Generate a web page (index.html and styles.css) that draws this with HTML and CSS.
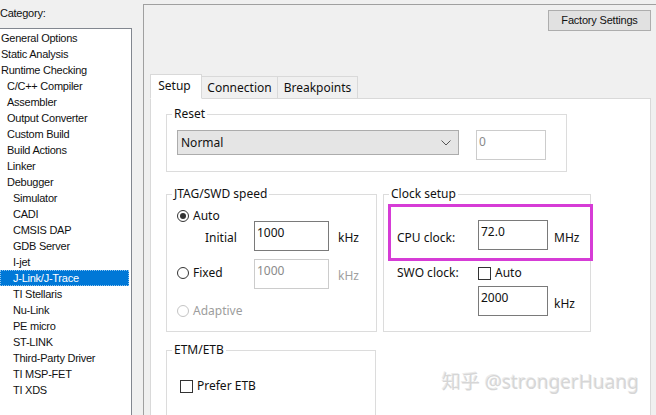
FILE: index.html
```html
<!DOCTYPE html>
<html>
<head>
<meta charset="utf-8">
<link rel="stylesheet" href="styles.css">
</head>
<body>
<div class="app">
  <div class="sidebar">
    <div class="cat-label">Category:</div>
    <div class="list">
      <div class="item l0">General Options</div>
      <div class="item l0">Static Analysis</div>
      <div class="item l0">Runtime Checking</div>
      <div class="item l1">C/C++ Compiler</div>
      <div class="item l1">Assembler</div>
      <div class="item l1">Output Converter</div>
      <div class="item l1">Custom Build</div>
      <div class="item l1">Build Actions</div>
      <div class="item l1">Linker</div>
      <div class="item l1">Debugger</div>
      <div class="item l2">Simulator</div>
      <div class="item l2">CADI</div>
      <div class="item l2">CMSIS DAP</div>
      <div class="item l2">GDB Server</div>
      <div class="item l2">I-jet</div>
      <div class="item l2 selected">J-Link/J-Trace</div>
      <div class="item l2">TI Stellaris</div>
      <div class="item l2">Nu-Link</div>
      <div class="item l2">PE micro</div>
      <div class="item l2">ST-LINK</div>
      <div class="item l2">Third-Party Driver</div>
      <div class="item l2">TI MSP-FET</div>
      <div class="item l2">TI XDS</div>
    </div>
  </div>
  <div class="panel">
    <div class="header">
      <div class="btn">Factory Settings</div>
    </div>
    <div class="tabs">
      <div class="tab active">Setup</div>
      <div class="tab t-conn">Connection</div>
      <div class="tab t-bp">Breakpoints</div>
    </div>
    <div class="pane">
      <div class="group g-reset">
        <span class="legend">Reset</span>
        <div class="row reset-row">
          <div class="select">
            <span>Normal</span>
            <svg class="chev" width="10" height="6" viewBox="0 0 10 6"><path d="M0.5 0.5 L5 5 L9.5 0.5" fill="none" stroke="#555" stroke-width="1"/></svg>
          </div>
          <div class="input disabled small">0</div>
        </div>
      </div>
      <div class="mid">
        <div class="group g-jtag">
          <span class="legend">JTAG/SWD speed</span>
          <div class="row j1">
            <span class="radio checked"></span><span class="rlabel">Auto</span>
          </div>
          <div class="row j2">
            <span class="initial">Initial</span>
            <div class="input">1000</div>
            <span class="unit">kHz</span>
          </div>
          <div class="row j3">
            <span class="rcell"><span class="radio"></span><span class="rlabel">Fixed</span></span>
            <div class="input disabled">1000</div>
            <span class="unit dis">kHz</span>
          </div>
          <div class="row j4">
            <span class="radio dis"></span><span class="rlabel dis">Adaptive</span>
          </div>
        </div>
        <div class="group g-clock">
          <span class="legend">Clock setup</span>
          <div class="mark"></div>
          <div class="row c1">
            <span class="clabel">CPU clock:</span>
            <div class="input cin">72.0</div>
            <span class="unit2">MHz</span>
          </div>
          <div class="row c2">
            <span class="clabel">SWO clock:</span>
            <span class="check"></span><span class="rlabel">Auto</span>
          </div>
          <div class="row c3">
            <span class="clabel"></span>
            <div class="input cin">2000</div>
            <span class="unit2">kHz</span>
          </div>
        </div>
      </div>
      <div class="group g-etm">
        <span class="legend">ETM/ETB</span>
        <div class="row e1">
          <span class="check"></span><span class="rlabel">Prefer ETB</span>
        </div>
      </div>
    </div>
  </div>
</div>
<div class="watermark">知乎 @strongerHuang</div>
</body>
</html>
```

FILE: styles.css
```css
* { box-sizing: border-box; }
html, body { margin: 0; padding: 0; }
body {
  width: 656px;
  height: 415px;
  overflow: hidden;
  background: #f0f0f0;
  font-family: "Noto Sans", "Noto Sans CJK SC", sans-serif;
  font-size: 12px;
  color: #111;
  position: relative;
}
.app { display: flex; height: 415px; }

/* sidebar */
.sidebar { width: 143px; flex: none; display: flex; flex-direction: column; }
.cat-label {
  height: 28px;
  line-height: 26px;
  font-family: "Liberation Sans", Arial, sans-serif;
  font-size: 11px;
  letter-spacing: -0.25px;
}
.list {
  flex: 1;
  width: 135px;
  margin-left: -3px;
  background: #fff;
  border: 1px solid #828790;
  border-bottom: none;
  padding-top: 1px;
  font-family: "Liberation Sans", Arial, sans-serif;
  font-size: 11px;
  letter-spacing: -0.25px;
}
.item { height: 16px; line-height: 16px; white-space: nowrap; }
.l0 { padding-left: 3px; }
.l1 { padding-left: 9px; }
.l2 { padding-left: 15px; }
.item.selected {
  background: #0078d7;
  color: #fff;
  margin-left: 2px;
  margin-right: 2px;
  padding-left: 12px;
  border: 1px dotted #8cc4f0;
  line-height: 14px;
}

/* panel */
.panel {
  flex: 1;
  margin-top: 4px;
  border-top: 1px solid #a0a0a0;
  border-left: 1px solid #a0a0a0;
  display: flex;
  flex-direction: column;
  min-width: 0;
}
.header { display: flex; justify-content: flex-end; padding-top: 5px; padding-right: 5px; }
.btn {
  width: 103px;
  height: 21px;
  background: #e1e1e1;
  border: 1px solid #adadad;
  font-family: "Liberation Sans", Arial, sans-serif;
  font-size: 11px;
  letter-spacing: -0.2px;
  text-align: center;
  line-height: 19px;
}
.tabs {
  display: flex;
  align-items: flex-end;
  margin-top: 43px;
  padding-left: 6px;
  height: 25px;
  margin-bottom: -1px;
  position: relative;
  z-index: 1;
}
.tab {
  height: 23px;
  background: #f0f0f0;
  border: 1px solid #d9d9d9;
  border-left: none;
  line-height: 21px;
  text-align: center;
}
.tab.active {
  height: 25px;
  width: 52px;
  background: #fff;
  border-left: 1px solid #d9d9d9;
  border-bottom: 1px solid #fff;
  line-height: 22px;
  padding-right: 3px;
}
.t-conn { width: 76px; }
.t-bp { width: 80px; }
.pane {
  flex: 1;
  margin-left: 6px;
  width: 501px;
  background: #fff;
  border: 1px solid #d9d9d9;
  border-bottom: none;
  padding: 15px 0 0 15px;
}

/* groups */
.group {
  position: relative;
  border: 1px solid #dcdcdc;
}
.legend {
  position: absolute;
  top: -9px;
  left: 5px;
  padding: 0 2px;
  background: #fff;
  line-height: 16px;
}
.row { display: flex; align-items: center; }
.g-reset { width: 401px; height: 58px; padding: 15px 0 0 10px; }
.reset-row { align-items: flex-start; }
.select {
  width: 282px;
  height: 25px;
  background: #e5e5e5;
  border: 1px solid #acacac;
  display: flex;
  align-items: center;
  justify-content: space-between;
  padding: 0 7px 0 3px;
}
.select span { line-height: 16px; }
.chev { display: block; }
.input {
  width: 75px;
  height: 30px;
  border: 1px solid #7a7a7a;
  padding: 3px 0 0 2px;
  line-height: 16px;
  background: #fff;
}
.input.small { width: 70px; margin-left: 17px; }
.input.disabled { border-color: #cccccc; color: #8a8a8a; }

.mid { display: flex; gap: 6px; margin-top: 22px; }
.g-jtag { width: 211px; height: 138px; padding: 13px 0 0 10px; }
.g-clock { width: 208px; height: 138px; padding: 25px 0 0 13px; }

.radio {
  width: 12px;
  height: 12px;
  border: 1px solid #333;
  border-radius: 50%;
  flex: none;
  display: flex;
  align-items: center;
  justify-content: center;
}
.radio.checked::after {
  content: "";
  width: 6px;
  height: 6px;
  border-radius: 50%;
  background: #333;
}
.radio.dis { border-color: #c4c4c4; }
.rlabel { margin-left: 4px; line-height: 16px; }
.dis { color: #9d9d9d; }
.j1 { height: 16px; }
.j2 { margin-top: -3px; height: 30px; }
.initial { width: 49px; margin-left: 28px; line-height: 16px; margin-top: 4px; }
.unit { margin-left: 9px; margin-top: 3px; }
.unit.dis { color: #a0a0a0; }
.j3 { margin-top: 8px; height: 30px; }
.rcell { display: flex; align-items: center; width: 77px; margin-top: -2px; }
.j4 { margin-top: 14px; height: 16px; }

.clabel { width: 81px; flex: none; line-height: 16px; }
.c1 { height: 30px; }
.c1 .clabel { margin-top: 6px; }
.input.cin { width: 70px; }
.unit2 { margin-left: 6px; margin-top: 5px; }
.c2 { margin-top: 15px; height: 16px; }
.c3 { margin-top: 5px; height: 30px; }
.check {
  width: 13px;
  height: 13px;
  border: 1px solid #333;
  background: #fff;
  flex: none;
}
.mark {
  position: absolute;
  left: 4px;
  top: 9px;
  width: 205px;
  height: 57px;
  border: 3px solid #d63cd6;
}

.g-etm { width: 210px; height: 80px; margin-top: 18px; padding: 27px 0 0 13px; }
.e1 { height: 16px; }

.watermark {
  position: absolute;
  left: 442px;
  top: 369px;
  font-family: "Noto Sans", "Noto Sans CJK SC", sans-serif;
  font-size: 19px;
  line-height: 26px;
  color: #d6d6d6;
  text-shadow: 1px 1px 0 #fff, -1px -1px 0 #ebebeb;
  white-space: nowrap;
}
```
